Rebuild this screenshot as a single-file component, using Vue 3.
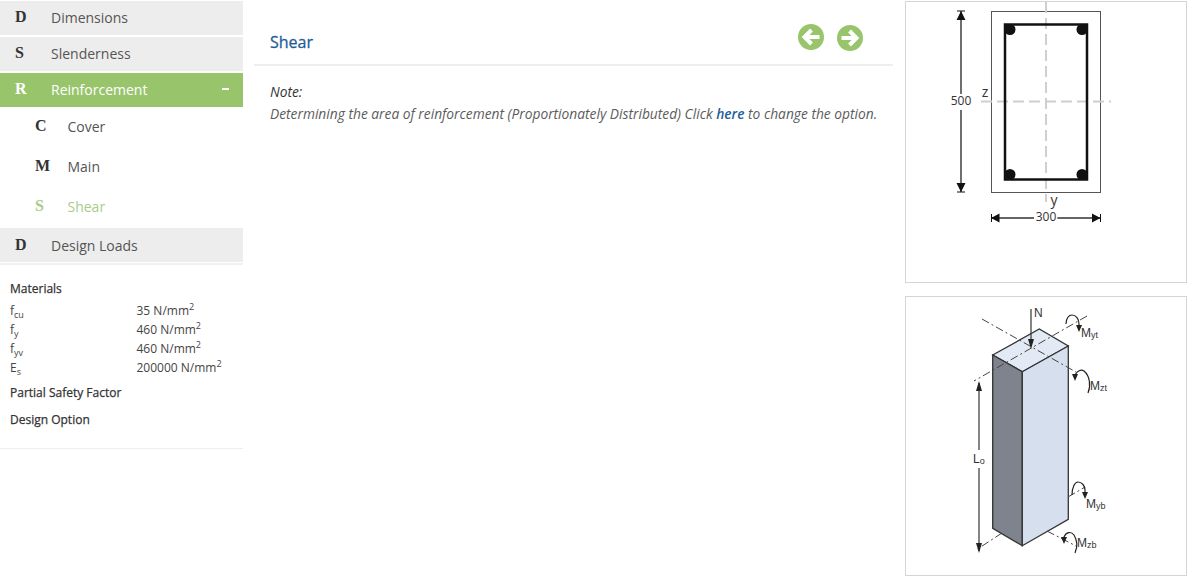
<template>
  <div class="page">
    <aside class="sidebar">
      <ul class="menu">
        <li v-for="item in topItems" :key="item.label" class="menu-row">
          <span class="letter">{{ item.letter }}</span>{{ item.label }}
        </li>
        <li class="menu-row active">
          <span class="letter">R</span>Reinforcement
          <span class="minus"></span>
        </li>
        <li v-for="item in subItems" :key="item.label" class="sub-row" :class="{ current: item.current }">
          <span class="letter">{{ item.letter }}</span>{{ item.label }}
        </li>
        <li class="menu-row last">
          <span class="letter">D</span>Design Loads
        </li>
      </ul>

      <div class="summary">
        <h4>Materials</h4>
        <div v-for="row in materials" :key="row.name + row.sub" class="mat-row">
          <span class="mat-name">{{ row.name }}<sub>{{ row.sub }}</sub></span>
          <span>{{ row.value }} N/mm<sup>2</sup></span>
        </div>
        <h4 class="factor">Partial Safety Factor</h4>
        <h4 class="option">Design Option</h4>
      </div>
    </aside>

    <main class="content">
      <header class="head">
        <h3>Shear</h3>
        <div class="arrows">
          <svg class="prev" width="26" height="26" viewBox="0 0 26 26">
            <circle cx="13" cy="13" r="13" fill="#98c46c" />
            <path d="M13.5 6 L6.5 13 L13.5 20 M8 13 H21.5" fill="none" stroke="#fff" stroke-width="4" />
          </svg>
          <svg class="next" width="26" height="26" viewBox="0 0 26 26">
            <circle cx="13" cy="13" r="13" fill="#98c46c" />
            <path d="M12.5 6 L19.5 13 L12.5 20 M18 13 H4.5" fill="none" stroke="#fff" stroke-width="4" />
          </svg>
        </div>
      </header>
      <div class="note">
        <p>Note:</p>
        <p class="note-text">Determining the area of reinforcement (Proportionately Distributed) Click <a>here</a> to change the option.</p>
      </div>
    </main>

    <section class="figures">
      <div class="figure first">
        <svg width="280" height="280" viewBox="906 2 280 280">
          <rect x="991.5" y="11.5" width="109" height="181" fill="none" stroke="#555" stroke-width="1" />
          <path d="M1046 2 V202" stroke="#cfcfcf" stroke-width="2" stroke-dasharray="11 5" fill="none" />
          <path d="M981 101.5 H1111" stroke="#cfcfcf" stroke-width="2" stroke-dasharray="11 5" fill="none" />
          <rect x="1005" y="24.5" width="82" height="155" fill="none" stroke="#111" stroke-width="2.5" />
          <circle cx="1010" cy="29.5" r="5.5" fill="#111" />
          <circle cx="1082" cy="29.5" r="5.5" fill="#111" />
          <circle cx="1010" cy="174.5" r="5.5" fill="#111" />
          <circle cx="1082" cy="174.5" r="5.5" fill="#111" />

          <path d="M961 11 V94 M961 110 V192" stroke="#333" stroke-width="1.4" />
          <path d="M957 11 H965 M957 192 H965" stroke="#111" stroke-width="1" />
          <path d="M961 11 L965.5 20 H956.5 Z M961 192 L965.5 183 H956.5 Z" fill="#111" />
          <text x="961" y="105" class="dim">500</text>
          <text x="985" y="97" class="dim axis-name">z</text>
          <text x="1054" y="205" class="dim axis-name">y</text>

          <path d="M991 218 H1034 M1057 218 H1100" stroke="#333" stroke-width="1.4" />
          <path d="M991.5 214 V222 M1100.5 214 V222" stroke="#111" stroke-width="1" />
          <path d="M991 218 L999.5 213.5 V222.5 Z M1100.5 218 L1092 213.5 V222.5 Z" fill="#111" />
          <text x="1046" y="221" class="dim">300</text>
        </svg>
      </div>

      <div class="figure">
        <svg width="280" height="278" viewBox="906 297 280 278">
          <polygon points="992.7,355 1039.3,329 1068.3,346 1022.3,371.7" fill="#e2eaf6" stroke="#333" stroke-width="1.3" />
          <polygon points="992.7,355 1022.3,371.7 1022.3,545.7 992.7,528.3" fill="#7f838d" stroke="#333" stroke-width="1.3" />
          <polygon points="1022.3,371.7 1068.3,346 1068.3,519.3 1022.3,545.7" fill="#d6dfee" stroke="#333" stroke-width="1.3" />

          <g class="axis">
            <path d="M982 319 L1076 372" />
            <path d="M1087 316 L974 381" />
            <path d="M1068 497 L1085 487" />
            <path d="M1047 531 L1076 546" />
            <path d="M1002 533 L976 550" />
          </g>

          <path d="M1031 309 V344" stroke="#333" stroke-width="1.2" fill="none" />
          <path d="M1031 349 L1028 339 H1034 Z" fill="#222" />

          <path d="M979 383 V551" stroke="#333" stroke-width="1.2" fill="none" />
          <path d="M979 381 L976 391 H982 Z M979 553 L976 543 H982 Z" fill="#222" />
          <rect x="973" y="450" width="14" height="18" fill="#fff" />

          <g class="moment">
            <path d="M1066 324 C1066 318 1069 315 1072 315 C1076 315 1079 319 1079 324 V328" />
            <path d="M1088 393 C1091 386 1090 376 1084 371 C1081 369 1077 371 1075 375 V378" />
            <path d="M1072 495 C1072 487 1075 482 1078 482 C1082 482 1085 486 1085 490 V495" />
            <path d="M1075 553 C1078 546 1077 540 1074 535 C1071 531 1066 532 1064 537 V540" />
          </g>
          <path d="M1079 332 L1076 325 H1082 Z M1075 381 L1072 374 H1078 Z M1085 499 L1082 492 H1088 Z M1064 544 L1061 537 H1067 Z" fill="#222" />

          <text x="1034" y="317" class="label">N</text>
          <text x="1081" y="337" class="label">M<tspan class="tiny" dy="1">yt</tspan></text>
          <text x="1090" y="390" class="label">M<tspan class="tiny" dy="1">zt</tspan></text>
          <text x="1086" y="508" class="label">M<tspan class="tiny" dy="1">yb</tspan></text>
          <text x="1077" y="547" class="label">M<tspan class="tiny" dy="1">zb</tspan></text>
          <text x="973" y="463" class="label">L<tspan class="tiny" dy="1">o</tspan></text>
        </svg>
      </div>
    </section>
  </div>
</template>

<script setup>
const topItems = [
  { letter: 'D', label: 'Dimensions' },
  { letter: 'S', label: 'Slenderness' }
]

const subItems = [
  { letter: 'C', label: 'Cover' },
  { letter: 'M', label: 'Main' },
  { letter: 'S', label: 'Shear', current: true }
]

const materials = [
  { name: 'f', sub: 'cu', value: '35' },
  { name: 'f', sub: 'y', value: '460' },
  { name: 'f', sub: 'yv', value: '460' },
  { name: 'E', sub: 's', value: '200000' }
]
</script>

<style>
html, body {
  background: #fff;
}
</style>

<style scoped>
.page {
  display: flex;
  width: 1189px;
  height: 580px;
  overflow: hidden;
  font-family: "Open Sans", sans-serif;
  color: #555;
}

.sidebar {
  width: 243px;
  flex-shrink: 0;
  padding-top: 1px;
}

.menu {
  list-style: none;
  margin: 0;
  padding: 0;
  font-size: 14px;
}

.menu-row {
  display: flex;
  align-items: center;
  height: 34px;
  box-sizing: border-box;
  margin-bottom: 2px;
  padding: 0 0 2px 15px;
  background: #ededed;
}

.menu-row .letter {
  width: 36px;
}

.letter {
  font-family: "Liberation Serif", serif;
  font-weight: bold;
  font-size: 16px;
  color: #333;
}

.active {
  background: #98c46c;
  color: #fff;
  margin-bottom: 0;
}

.active .letter {
  color: #fff;
}

.minus {
  width: 7px;
  height: 2px;
  margin-left: auto;
  margin-right: 14px;
  background: #fff;
}

.sub-row {
  display: flex;
  align-items: center;
  height: 40px;
  box-sizing: border-box;
  padding: 0 0 2px 35px;
}

.sub-row .letter {
  width: 32.5px;
}

.sub-row.current,
.sub-row.current .letter {
  color: #a8cc88;
}

.last {
  margin-top: 1px;
  margin-bottom: 0;
  padding-bottom: 0;
}

.summary {
  margin-top: 1px;
  height: 186px;
  box-sizing: border-box;
  padding: 15px 10px 0;
  border-top: 2px solid #f1f1f1;
  border-bottom: 1px solid #eee;
  font-size: 12px;
  color: #444;
}

.summary h4 {
  margin: 0;
  font-size: 12px;
  line-height: 17px;
  font-weight: 400;
  color: #333;
  -webkit-text-stroke: 0.25px #333;
}

.mat-row {
  display: flex;
  height: 19px;
  line-height: 19px;
}

.mat-row:first-of-type {
  margin-top: 4px;
}

.mat-name {
  width: 126.5px;
}

sub, sup {
  font-size: 9px;
  line-height: 0;
}

.summary .factor {
  margin-top: 7px;
}

.summary .option {
  margin-top: 10px;
}

.content {
  width: 639px;
  flex-shrink: 0;
  margin-left: 11px;
}

.head {
  display: flex;
  justify-content: space-between;
  height: 66px;
  box-sizing: border-box;
  border-bottom: 2px solid #eee;
  padding: 0 16px;
}

.head h3 {
  margin: 31px 0 0;
  font-size: 16px;
  line-height: 22px;
  font-weight: 400;
  color: #1f5d99;
  -webkit-text-stroke: 0.3px #1f5d99;
}

.arrows {
  display: flex;
  align-items: flex-start;
  gap: 13px;
  margin-top: 24px;
  margin-right: 14px;
}

.next {
  margin-top: 1px;
}

.note {
  padding: 14px 0 0 16px;
  font-size: 13.78px;
  font-style: italic;
  line-height: 23px;
  color: #333;
  white-space: nowrap;
}

.note p {
  margin: 0;
}

.note .note-text {
  margin-top: -1px;
  color: #5c5c5c;
}

.note a {
  color: #1f5d99;
  font-weight: 600;
}

.figures {
  margin-left: 12px;
  width: 282px;
  padding-top: 1px;
  display: flex;
  flex-direction: column;
  gap: 13px;
}

.figure {
  border: 1px solid #d5d5d5;
  line-height: 0;
}

.figure svg {
  display: block;
}

.dim {
  font-family: "Open Sans", sans-serif;
  font-size: 12px;
  fill: #333;
  text-anchor: middle;
  paint-order: stroke;
  stroke: #fff;
  stroke-width: 3px;
}

.axis-name {
  font-size: 14px;
  stroke: none;
}

.label {
  font-family: "Liberation Sans", sans-serif;
  font-size: 12px;
  fill: #333;
}

.tiny {
  font-size: 9px;
}

.axis path {
  fill: none;
  stroke: #444;
  stroke-width: 1;
  stroke-dasharray: 8 3 2 3;
}

.moment path {
  fill: none;
  stroke: #222;
  stroke-width: 1.2;
}
</style>
